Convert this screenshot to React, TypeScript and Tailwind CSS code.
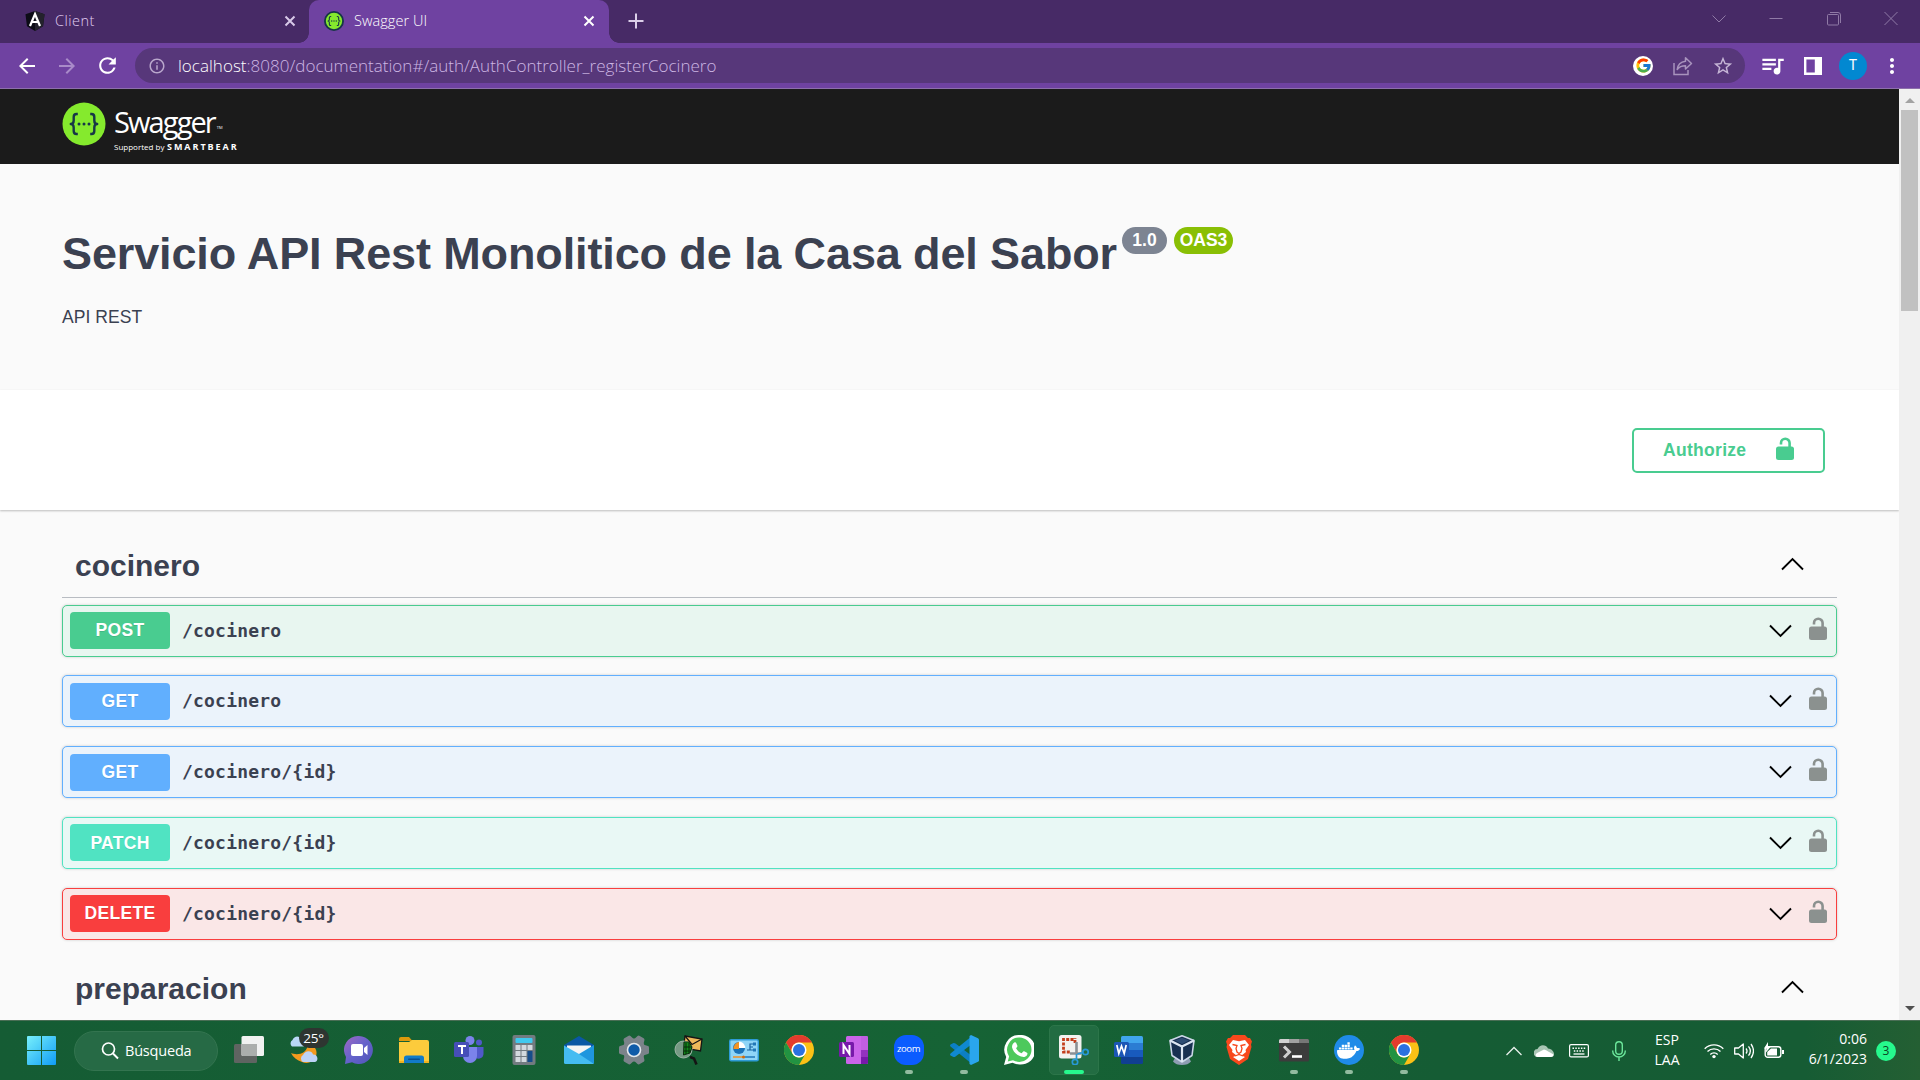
import React from "react";
import { FcGoogle } from "react-icons/fc";
import { SiDocker } from "react-icons/si";
import { MdQueueMusic, MdStarBorder, MdRefresh, MdArrowBack, MdArrowForward, MdInfoOutline, MdMoreVert } from "react-icons/md";

const Svg = ({ w = 30, h = 30, children, className = "" }: { w?: number; h?: number; children: React.ReactNode; className?: string }) => (
  <svg width={w} height={h} viewBox={`0 0 ${w} ${h}`} fill="none" className={`shrink-0 ${className}`}>
    {children}
  </svg>
);

const Close = ({ color }: { color: string }) => (
  <Svg w={12} h={12}>
    <path d="M1.5 1.5l9 9M10.5 1.5l-9 9" stroke={color} strokeWidth="2" />
  </Svg>
);

const Braces = ({ size, ring }: { size: number; ring?: boolean }) => (
  <svg width={size} height={size} viewBox="0 0 44 44" fill="none" className="shrink-0">
    <circle cx="22" cy="22" r={ring ? 20 : 21.5} fill="#85ea2d" stroke={ring ? "#173647" : "none"} strokeWidth={ring ? 4 : 0} />
    <g stroke="#173647" strokeWidth="2.4" strokeLinejoin="round">
      <path d="M15.8 12h-1.3c-2 0-2.8 1-2.8 3v3.500c0 2-.8 3.500-2.900 3.500 2.100 0 2.900 1.500 2.900 3.500V29c0 2 .8 3 2.800 3h1.300" />
      <path d="M28.200 12h1.300c2 0 2.800 1 2.800 3v3.500c0 2 .8 3.500 2.900 3.500-2.100 0-2.900 1.500-2.900 3.500V29c0 2-.8 3-2.800 3h-1.300" />
    </g>
    <g fill="#173647">
      <circle cx="17" cy="22" r="1.500" />
      <circle cx="22" cy="22" r="1.500" />
      <circle cx="27" cy="22" r="1.500" />
    </g>
  </svg>
);

function TabBar() {
  return (
    <div className="flex h-[43px] bg-[#472a66]">
      <div className="flex w-[309px] items-center pb-0.5 pl-[25px] pr-[13px]">
        <Svg w={20} h={20}>
          <path d="M10 0l9.500 3.300-1.500 12L10 20l-8-4.700L.5 3.300z" fill="#0c0c16" />
          <path d="M10 0l9.500 3.300-1.500 12L10 20z" fill="#23222c" />
          <path d="M5 15L10 3l5 12M7 11h6" stroke="#fff" strokeWidth="2.200" />
        </Svg>
        <span className="ml-[10px] flex-1 text-[14.5px] font-light tracking-[0.5px] text-[#e0cdf2]">Client</span>
        <Close color="#d8c9e8" />
      </div>
      <div className="relative flex w-[300px] items-center rounded-t-[10px] bg-[#6f42a1] pb-0.5 pl-[15px] pr-[14px]">
        <span className="absolute bottom-0 -left-[10px] h-[10px] w-[10px] bg-[radial-gradient(circle_at_0_0,#472a66_9.500px,#6f42a1_10px)]" />
        <span className="absolute bottom-0 -right-[10px] h-[10px] w-[10px] bg-[radial-gradient(circle_at_100%_0,#472a66_9.500px,#6f42a1_10px)]" />
        <Braces size={20} ring />
        <span className="ml-[10px] flex-1 text-[14.5px] font-light tracking-[0.05px] text-white">Swagger UI</span>
        <Close color="#ffffff" />
      </div>
      <div className="flex flex-1 items-center pb-0.5 pl-[19px]">
        <Svg w={16} h={16}>
          <path d="M8 .5v15M.5 8h15" stroke="#dccfe9" strokeWidth="2" />
        </Svg>
      </div>
      <div className="flex w-[219px] items-start justify-between pl-[11px] pr-[22px] pt-[11px]">
        <Svg w={14} h={15}><path d="M.5 4.500L7 11l6.500-6.500" stroke="#907aa6" /></Svg>
        <Svg w={14} h={15}><path d="M.5 7.500h13" stroke="#907aa6" /></Svg>
        <Svg w={14} h={15}><path d="M.5 4.500a1 1 0 011-1h9a1 1 0 011 1v8.500a1 1 0 01-1 1h-9a1 1 0 01-1-1zM3 1.500h8a2.500 2.500 0 012.500 2.500v8" stroke="#907aa6" /></Svg>
        <Svg w={14} h={15}><path d="M.5 1l13 13M13.500 1l-13 13" stroke="#907aa6" /></Svg>
      </div>
    </div>
  );
}

function Toolbar() {
  return (
    <div className="flex h-[46px] items-center border-b border-[#8d6fab] bg-[#6f42a1] pl-[15px]">
      <MdArrowBack size={24} className="text-white" />
      <MdArrowForward size={24} className="ml-[16px] text-[#a98bc9]" />
      <MdRefresh size={25} className="ml-[16px] text-white" />
      <div className="ml-[15px] flex h-[35px] w-[1610px] items-center rounded-full bg-[#57377a] pl-[13px] pr-[11px]">
        <MdInfoOutline size={18} className="text-[#b9a7cc]" />
        <span className="ml-[12px] flex-1 text-[17px] font-light tracking-[0.02px] text-[#cdb6e4]">
          <span className="text-white">localhost</span>:8080/documentation#/auth/AuthController_registerCocinero
        </span>
        <span className="flex h-5 w-5 items-center justify-center rounded-full bg-white">
          <FcGoogle size={17} />
        </span>
        <Svg w={20} h={20} className="ml-[20px]">
          <path d="M1 7v11.500h14V14" stroke="#a893bd" strokeWidth="1.500" />
          <path d="M12.500 1.800l6 5.700-6 5.500V9.800C8.500 9.800 6 11 4.200 13.500c.5-4.500 3.500-7.700 8.300-8.300z" stroke="#a893bd" strokeWidth="1.500" strokeLinejoin="round" />
        </Svg>
        <MdStarBorder size={22} className="ml-[19px] text-[#c6b6d6]" />
      </div>
      <MdQueueMusic size={27} className="ml-[14px] text-white" />
      <Svg w={18} h={18} className="ml-[18px]">
        <path d="M1.200 1.200h15.600v15.600H1.200zM12 1v16" stroke="#fff" strokeWidth="2.400" />
        <path d="M12 1h5v16h-5z" fill="#fff" />
      </Svg>
      <span className="ml-[17px] flex h-7 w-7 items-center justify-center rounded-full bg-[#0288d1] font-[Roboto] text-[14px] text-white">T</span>
      <MdMoreVert size={24} className="ml-[13px] text-white" />
    </div>
  );
}

const Lock = ({ className }: { className: string }) => (
  <Svg w={18} h={24} className={className}>
    <path d="M5 7.500V6a4.300 4.300 0 018.600 0v4" stroke="currentColor" strokeWidth="2.600" />
    <rect x="0" y="9.500" width="18" height="13.500" rx="2.500" fill="currentColor" />
  </Svg>
);

const Chevron = ({ up, className = "" }: { up?: boolean; className?: string }) => (
  <Svg w={23} h={14} className={className}>
    <path d={up ? "M1 12.500L11.500 2 22 12.500" : "M1 1.500L11.500 12 22 1.500"} stroke="#000" strokeWidth="1.900" />
  </Svg>
);

type Op = { method: string; path: string; box: string; badge: string };
const get = { method: "GET", box: "border-[#61affe] bg-[#ebf3fb]", badge: "bg-[#61affe]" };
const ops: Op[] = [
  { method: "POST", path: "/cocinero", box: "border-[#49cc90] bg-[#e8f6f0]", badge: "bg-[#49cc90]" },
  { ...get, path: "/cocinero" },
  { ...get, path: "/cocinero/{id}" },
  { method: "PATCH", path: "/cocinero/{id}", box: "border-[#50e3c2] bg-[#e9f8f5]", badge: "bg-[#50e3c2]" },
  { method: "DELETE", path: "/cocinero/{id}", box: "border-[#f93e3e] bg-[#fae7e7]", badge: "bg-[#f93e3e]" },
];

function TagHeader({ name }: { name: string }) {
  return (
    <div className="flex h-[64px] items-center justify-between border-b border-[#b8bcc2] pl-[13px] pr-[33px]">
      <h2 className="text-[30px] font-bold text-[#3b4151]">{name}</h2>
      <Chevron up className="mb-[3px]" />
    </div>
  );
}

function Page() {
  return (
    <main className="h-full flex-1 overflow-hidden bg-[#fafafa] font-['Liberation_Sans',sans-serif]">
      <header className="flex h-[75px] items-start bg-[#1b1b1b] pl-[62px] pt-[13px]">
        <Braces size={44} />
        <div className="ml-[8px] font-['Open_Sans',sans-serif] text-white">
          <div className="mt-[2px] flex h-[37px] items-end">
            <span className="text-[29px] leading-[39px] tracking-[-1.9px]">Swagger</span>
            <span className="ml-[2px] text-[4px] leading-[26px]">TM</span>
          </div>
          <div className="flex items-baseline leading-[12px]">
            <span className="w-[53px] text-[8px] whitespace-nowrap">Supported by</span>
            <span className="text-[9px] font-bold tracking-[1.95px]">SMARTBEAR</span>
          </div>
        </div>
      </header>

      <section className="h-[226px] pl-[62px] pt-[62px] text-[#3b4151]">
        <div className="flex items-start">
          <h1 className="text-[45px] leading-[56px] font-bold tracking-[-0.125px] whitespace-nowrap">Servicio API Rest Monolitico de la Casa del Sabor</h1>
          <span className="ml-[5px] mt-[1px] flex h-[27px] w-[45px] items-center justify-center rounded-full bg-[#7d8492] text-[17.5px] font-bold text-white">1.0</span>
          <span className="ml-[7px] mt-[1px] flex h-[27px] w-[59px] items-center justify-center rounded-full bg-[#89bf04] text-[17.5px] font-bold text-white">OAS3</span>
        </div>
        <p className="mt-[24px] text-[17.5px] leading-[22px] tracking-[0.05px]">API REST</p>
      </section>

      <section className="flex h-[120px] items-start justify-end bg-white pr-[74px] pt-[38px] shadow-[0_1px_2px_0_rgba(0,0,0,0.25)]">
        <button className="flex h-[45px] w-[193px] items-center justify-between rounded-[5px] border-2 border-[#49cc90] pl-[29px] pr-[29px] pb-[1px] text-[17.5px] font-bold tracking-[0.3px] text-[#49cc90]">
          Authorize
          <Lock className="mb-[3px]" />
        </button>
      </section>

      <section className="pl-[62px] pr-[62px] pt-[24px]">
        <TagHeader name="cocinero" />
        <div className="flex flex-col gap-[18.75px] pt-[6.5px]">
          {ops.map((op) => (
            <div key={op.method + op.path} className={`flex h-[52px] items-center rounded-[5px] border pl-[7px] pr-[9px] shadow-[0_0_3px_rgba(0,0,0,0.19)] ${op.box}`}>
              <span className={`flex h-[37px] w-[100px] items-center justify-center rounded-[4px] text-[17.5px] font-bold tracking-[0.3px] text-white [text-shadow:0_1px_0_rgba(0,0,0,0.1)] ${op.badge}`}>{op.method}</span>
              <span className="mb-[1px] ml-[12px] flex-1 font-['DejaVu_Sans_Mono',monospace] text-[18px] font-bold tracking-[0.2px] text-[#3b4151]">{op.path}</span>
              <Chevron />
              <Lock className="mb-[4px] ml-[17px] text-[#8b918f]" />
            </div>
          ))}
        </div>
        <div className="mt-[17px]">
          <TagHeader name="preparacion" />
        </div>
      </section>
    </main>
  );
}

function Scrollbar() {
  return (
    <div className="flex h-full w-[21px] flex-col items-center bg-[#f0f0f0] py-[8px]">
      <Svg w={10} h={6}><path d="M0 6l5-5 5 5z" fill="#a3a3a3" /></Svg>
      <div className="mt-[7px] h-[201px] w-[17px] bg-[#c1c1c1]" />
      <div className="flex-1" />
      <Svg w={10} h={6}><path d="M0 0l5 5 5-5z" fill="#505050" /></Svg>
    </div>
  );
}

const TaskView = () => (
  <Svg>
    <rect x="0" y="9" width="23" height="19" rx="1.500" fill="#5f6461" />
    <rect x="7.500" y="1" width="22.500" height="20" rx="1.500" fill="#f1f2f1" />
    <path d="M7.500 9H23v12H9a1.500 1.500 0 01-1.500-1.500z" fill="#abaeac" />
  </Svg>
);

const Weather = () => (
  <div className="relative h-[30px] w-[30px]">
    <Svg>
      <path d="M2 18c3 1.500 9 2 13-1 3-2.500 4-6 4-9 7 2 10 8 8 13-3 7-9 8-14 6C8 25.500 4 22 2 18z" fill="#f39a1e" />
      <path d="M3 11.500a4 4 0 01.5-6.500C5 1 10 0 12 4c3-1 5 2 4 5 0 2-1 2.500-3 2.500z" fill="#b9d8f6" />
      <path d="M14 27a4 4 0 010-7c2-5 9-5 10-.5 5-.5 6 6.500 2 7.500z" fill="#bdd3f6" />
    </Svg>
    <span className="absolute -top-[7px] left-[10px] flex h-[20px] w-[30px] items-center justify-center rounded-full bg-[#2e3531] text-[13.5px] tracking-[-0.3px] text-white">25°</span>
  </div>
);

const Chat = () => (
  <Svg>
    <defs>
      <linearGradient id="chat" x1="0" y1="0" x2="1" y2="1"><stop stopColor="#a068c4" /><stop offset=".5" stopColor="#6563cb" /><stop offset="1" stopColor="#5054b8" /></linearGradient>
    </defs>
    <path d="M15 1a14 14 0 11-7 26.200L1 29l1-7A14 14 0 0115 1z" fill="url(#chat)" />
    <rect x="7" y="9" width="12" height="12" rx="2" fill="#fff" />
    <path d="M20 13l3.500-3v10L20 17z" fill="#fff" />
  </Svg>
);

const Explorer = () => (
  <Svg>
    <path d="M0 4a2 2 0 012-2h8l3.500 4H0z" fill="#dd9a0d" />
    <path d="M0 7h10l3-2h15a2 2 0 012 2v21H2a2 2 0 01-2-2z" fill="#fccb3c" />
    <path d="M0 26h30v2H0z" fill="#f0b21f" />
    <path d="M5 28v-5a2.500 2.500 0 012.500-2.500h15A2.500 2.500 0 0125 23v5z" fill="#127bc7" />
    <rect x="9" y="23.500" width="12" height="1.500" rx=".7" fill="#0b4f8d" />
  </Svg>
);

const Teams = () => (
  <Svg>
    <circle cx="25" cy="7.500" r="3" fill="#5059c9" />
    <path d="M20 12h9.500v7a5 5 0 01-7.500 4z" fill="#5059c9" />
    <circle cx="16" cy="5.500" r="4.500" fill="#7b83eb" />
    <path d="M9 12h14v9a7 7 0 01-14 0z" fill="#7b83eb" />
    <rect x="0" y="7" width="15" height="15" rx="1.500" fill="#464eb8" />
    <path d="M4 11h8M8 11v8" stroke="#fff" strokeWidth="2" />
  </Svg>
);

const Calculator = () => (
  <Svg>
    <rect x="3.500" y="0" width="23" height="30" rx="2" fill="#727b80" />
    <rect x="6.500" y="3" width="17" height="5" rx="1" fill="#40c9ee" />
    <g fill="#d3d9de">
      {[10, 16, 22].map((y) => [6.5, 12.5, 18.5].map((x) => (x > 18 && y > 10 ? null : <rect key={`${x}-${y}`} x={x} y={y} width="5" height="5" rx=".5" />)))}
    </g>
    <rect x="18.500" y="16" width="5" height="11" rx=".5" fill="#174d8a" />
  </Svg>
);

const Mail = () => (
  <Svg>
    <path d="M0 10L15 1l15 9v6H0z" fill="#0a57a4" />
    <path d="M3 10.500h24v6L15 22 3 16.500z" fill="#f4f4f4" />
    <path d="M30 10v17.500a1.500 1.500 0 01-1.500 1.500H2l13-10z" fill="#1f96de" />
    <path d="M0 10.500L15 19l15 10H1.500A1.500 1.500 0 010 27.500z" fill="#45bcf1" />
  </Svg>
);

const Settings = () => (
  <Svg>
    <g fill="#7b838a">
      <circle cx="15" cy="15" r="11.500" />
      {[0, 60, 120, 180, 240, 300].map((a) => (
        <path key={a} d="M9.500 6l1.500-5q.4-1 1.500-1h5q1.100 0 1.500 1l1.500 5z" transform={`rotate(${a + 30} 15 15)`} />
      ))}
    </g>
    <circle cx="15" cy="15" r="6.500" fill="#0f5ba8" stroke="#e4e9ee" strokeWidth="1.600" />
  </Svg>
);

const MailTracker = () => (
  <Svg>
    <path d="M11 1l17 3-1.500 12-17-3z" fill="#edb95a" stroke="#151515" strokeWidth="1.300" />
    <path d="M11 1l7 8.500L28 4" stroke="#151515" strokeWidth="1.300" />
    <circle cx="9.500" cy="14.500" r="8.500" fill="#87a493" fillOpacity=".85" stroke="#a1b5a8" />
    <path d="M10 7h5l3 5-2 6-6.500 2z" fill="#128a1c" stroke="#0a2c0d" />
    <path d="M12 8v11M15 8v10M10 12h8M10 16h7" stroke="#062b0b" />
    <path d="M16 22l4 1.500 2.500 6" stroke="#141414" strokeWidth="2.600" />
  </Svg>
);

const ControlPanel = () => (
  <Svg>
    <rect x=".7" y="4.700" width="28.600" height="21" rx="1.500" fill="#8fd5f7" stroke="#2e9bd6" strokeWidth="1.400" />
    <circle cx="10" cy="13" r="6" fill="#1a73b8" />
    <path d="M10 13V6.500a6.500 6.500 0 016.300 6.500z" fill="#fff" />
    <path d="M10 14V7a6.500 6.500 0 00-5.500 7z" fill="#f49424" />
    <path d="M18 15h3V9h3M21 12h3M21 15h3" stroke="#17629f" strokeWidth="1.200" />
    <path d="M24 7.500h3v3h-3zM24 13.500h3v3h-3z" fill="#2177b8" />
    <path d="M4 22h12" stroke="#ef8f24" strokeWidth="1.500" />
    <path d="M16 22h10" stroke="#2177b8" strokeWidth="1.500" />
    <circle cx="14.500" cy="22" r="1.500" fill="#c86b12" />
  </Svg>
);

const Chrome = () => (
  <Svg>
    <circle cx="15" cy="15" r="15" fill="#fbc116" />
    <path d="M2 7.500A15 15 0 0128 7.500H15a7.500 7.500 0 00-6.500 11.250z" fill="#e33b2e" />
    <path d="M2 7.500A15 15 0 0015 30l6.500-11.250a7.500 7.500 0 01-13 0z" fill="#229342" />
    <circle cx="15" cy="15" r="7.500" fill="#fff" />
    <circle cx="15" cy="15" r="6" fill="#2b71e0" />
  </Svg>
);

const OneNote = () => (
  <Svg>
    <rect x="7" y="1" width="22" height="28" rx="1.500" fill="#ca64ea" />
    <path d="M22 1h5.500A1.500 1.500 0 0129 2.500V15h-7z" fill="#c05fe2" />
    <path d="M22 15h7v7h-7z" fill="#9332bf" />
    <path d="M22 22h7v5.500a1.500 1.500 0 01-1.500 1.500H22z" fill="#7719aa" />
    <rect x="0" y="7" width="15" height="15" rx="1.500" fill="#7719aa" />
    <path d="M4.500 19v-9l6 9v-9" stroke="#fff" strokeWidth="2" />
  </Svg>
);

const Zoom = () => (
  <div className="flex h-[30px] w-[30px] items-center justify-center rounded-[12px] bg-[#0b5cff] pb-[3px] text-[9.5px] leading-none font-normal tracking-[-0.4px] text-white">zoom</div>
);

const VSCode = () => (
  <Svg>
    <path d="M1.500 9.500L4.500 8q1-.3 2 .5L23 21v8L1.500 11.500q-1-1 0-2z" fill="#0c7fc4" />
    <path d="M1.500 20.500L4.500 22q1 .3 2-.5L23 9V1L1.500 18.500q-1 1 0 2z" fill="#1089d0" />
    <path d="M22 0l7 3.300q1 .5 1 1.500v20.400q0 1-1 1.500L22 30l-1.500-1V1z" fill="#2aa6ee" />
  </Svg>
);

const WhatsApp = () => (
  <Svg>
    <path d="M15.500 0A14.800 14.800 0 1115.500 29.500c-2.500 0-5-.6-7-1.700L0 30l2.200-8A14.800 14.800 0 0115.500 0z" fill="#fff" />
    <path d="M15.300 2.500A12.200 12.200 0 1115.300 26.900c-2.300 0-4.500-.6-6.300-1.700L3.700 26.500l1.400-5.100A12.200 12.200 0 0115.300 2.500z" fill="#4dc95c" />
    <path d="M10.300 7.500c.7-.5 1.600-.3 1.900.4l1.200 2.800c.2.600-.1 1.200-1.300 2.500 1.500 2.700 3 4 5.600 5 1.500-1.800 1.800-2.200 2.500-1.900l2.800 1.400c.7.400.6 1.300.1 2.200-1.200 1.800-3 2.300-5 1.900-5.500-1.300-9.200-5.400-10-9.300-.3-2.200.7-4 2.200-5z" fill="#fff" />
  </Svg>
);

const Snip = () => (
  <Svg>
    <rect x="0" y="0" width="22.500" height="23.500" rx="2.500" fill="#f3f2f0" />
    <path d="M14.500 4.500H4.500V17H12M16 8V3" stroke="#c43e1c" strokeWidth="2.800" strokeDasharray="3 1.300" />
    <path d="M17.500 7v12.500M11 18.500h11" stroke="#8b9095" strokeWidth="2.600" />
    <circle cx="26.500" cy="17" r="2.700" stroke="#2899d8" strokeWidth="1.700" />
    <circle cx="16" cy="27" r="2.700" stroke="#2899d8" strokeWidth="1.700" />
    <path d="M17.500 19v5.500M18.500 19l5.500-1.500" stroke="#2899d8" strokeWidth="1.700" />
  </Svg>
);

const Word = () => (
  <Svg>
    <path d="M7 2.500A1.500 1.500 0 018.500 1h19A1.500 1.500 0 0129 2.500V8H7z" fill="#41a5ee" />
    <path d="M7 8h22v7H7z" fill="#2b7cd3" />
    <path d="M7 15h22v7H7z" fill="#185abd" />
    <path d="M7 22h22v5.500a1.500 1.500 0 01-1.500 1.500h-19A1.500 1.500 0 017 27.500z" fill="#103f91" />
    <rect x="0" y="7" width="15" height="15" rx="1.500" fill="#1b56b5" />
    <path d="M2.800 10l2 8.500L7.500 11l2.700 7.500 2-8.500" stroke="#fff" strokeWidth="1.700" />
  </Svg>
);

const VBox = () => (
  <Svg className="-ml-1">
    <path d="M8 23h14l2 3.500q-3 3.500-9 3.500t-9-3.500z" fill="#8e9db3" />
    <path d="M15 .8L27 5.500 25 20.500 15 27 5 20.500 3 5.500z" fill="#183051" stroke="#ccd7e8" strokeWidth="1.600" strokeLinejoin="round" />
    <path d="M3 5.500L15 11.500l12-6M15 11.500V27" stroke="#dce5f2" strokeWidth="2.200" />
    <path d="M8 5.500l7-2.700 7 2.700-7 3.500z" fill="#2e4c73" />
  </Svg>
);

const Brave = () => (
  <Svg>
    <path d="M9 0h12l3 3h2l2 3.500-1 3 .5 2.500-3.500 12L15 30l-9-6L2.500 12 3 9.500l-1-3L4 3h2z" fill="#f8481c" />
    <path d="M9 5l6 1.200L21 5l4 5-3.500 5 .5 2-4.500 3.500L21 22l-6 4-6-4 3.500-1.500L8 17l.5-2L5 10z" fill="#fff" />
    <path d="M8.500 9.500l4.500 1-1 3 1 3.500 2 1.500 2-1.500 1-3.500-1-3 4.500-1M11 21l4-1.500 4 1.500" stroke="#f8481c" strokeWidth="1.300" />
  </Svg>
);

const Terminal = () => (
  <Svg>
    <rect x="0" y="4" width="30" height="22.500" rx="1.500" fill="#3c3c3c" />
    <path d="M1.500 4H10v4H0V5.500A1.500 1.500 0 011.500 4z" fill="#d0d0d0" />
    <path d="M10 4h10v4H10z" fill="#a0a0a0" />
    <path d="M20 4h8.500A1.500 1.500 0 0130 5.500V8H20z" fill="#767676" />
    <path d="M5 11.500l5.500 5.500L5 22.500" stroke="#cfcfcf" strokeWidth="3" />
    <path d="M13 21.500h10" stroke="#fff" strokeWidth="2.600" />
  </Svg>
);

const Docker = () => (
  <div className="flex h-[30px] w-[30px] items-center justify-center rounded-full bg-[#1f8be8]">
    <SiDocker size={23} className="text-white" />
  </div>
);

type Task = { icon: React.ReactNode; running?: boolean; active?: boolean };
const tasks: Task[] = [
  { icon: <TaskView /> },
  { icon: <Weather /> },
  { icon: <Chat /> },
  { icon: <Explorer /> },
  { icon: <Teams /> },
  { icon: <Calculator /> },
  { icon: <Mail /> },
  { icon: <Settings /> },
  { icon: <MailTracker /> },
  { icon: <ControlPanel /> },
  { icon: <Chrome /> },
  { icon: <OneNote /> },
  { icon: <Zoom />, running: true },
  { icon: <VSCode />, running: true },
  { icon: <WhatsApp /> },
  { icon: <Snip />, active: true },
  { icon: <Word /> },
  { icon: <VBox /> },
  { icon: <Brave /> },
  { icon: <Terminal />, running: true },
  { icon: <Docker />, running: true },
  { icon: <Chrome />, running: true },
];

function Taskbar() {
  return (
    <footer className="flex h-[60px] items-center border-t border-[#4a6e55] bg-[linear-gradient(90deg,#155c34_0%,#166335_50%,#155c34_75%,#165c34_94%,#245f33_100%)] pl-[27px] text-white">
      <Svg w={29} h={29}>
        <defs>
          <linearGradient id="win" x1="0" y1="0" x2="29" y2="29" gradientUnits="userSpaceOnUse"><stop stopColor="#78f0fb" /><stop offset="1" stopColor="#109cf5" /></linearGradient>
        </defs>
        <path d="M1 0h13v14H0V1a1 1 0 011-1zM15 0h13a1 1 0 011 1v13H15zM0 15h14v14H1a1 1 0 01-1-1zM15 15h14v13a1 1 0 01-1 1H15z" fill="url(#win)" />
      </Svg>
      <div className="ml-[18px] flex h-[40px] w-[144px] items-center rounded-full border border-[#33744f] bg-[#266a45] pl-[26px]">
        <Svg w={18} h={18}><circle cx="7.500" cy="7" r="6" stroke="#fff" strokeWidth="1.700" /><path d="M12 11.500l5 5" stroke="#fff" strokeWidth="1.900" /></Svg>
        <span className="ml-[6px] pt-px text-[14.5px] tracking-[-0.2px]">Búsqueda</span>
      </div>
      <div className="ml-[3px] flex">
        {tasks.map((t, i) => (
          <div key={i} className="flex h-[59px] w-[55px] justify-center">
            <div className={`relative mt-[4px] flex h-[50px] w-[50px] items-center justify-center rounded-[5px] ${t.active ? "border border-[#2c7549] bg-[#226c42]" : ""}`}>
              {t.icon}
              {t.running && <span className="absolute bottom-px left-[21px] h-[4px] w-[8px] rounded-full bg-[#92bb9f]" />}
              {t.active && <span className="absolute bottom-0 left-[14px] h-[4px] w-[20px] rounded-full bg-[#26f98d]" />}
            </div>
          </div>
        ))}
      </div>
      <div className="ml-[75px] flex flex-1 items-center text-[14px] leading-[20px]">
        <Svg w={16} h={10}><path d="M.5 9L8 1.500 15.500 9" stroke="#e8f0eb" strokeWidth="1.300" /></Svg>
        <Svg w={20} h={14} className="ml-[12px]">
          <path d="M4 13a4 4 0 01-.5-8C5.500 0 12 0 14 4.500c4 0 6 4 6 5.500 0 2-1 3-3 3z" fill="#a9c5b4" />
          <path d="M2 12.500C1 11 2 9 4 8.500l6-3c3 1 5 2.500 9.500 5 0 1.500-1 2.500-2.500 2.500H3.500z" fill="#fff" />
        </Svg>
        <Svg w={20} h={14} className="ml-[15px]">
          <rect x=".6" y=".6" width="18.800" height="12.300" rx="1.500" stroke="#fff" strokeWidth="1.200" />
          <path d="M3.500 4.200h13M4.800 7h11" stroke="#fff" strokeWidth="1.500" strokeDasharray="1.500 1.300" />
          <path d="M4.500 10h11" stroke="#fff" strokeWidth="1.300" />
        </Svg>
        <Svg w={14} h={20} className="ml-[23px]">
          <rect x="3.700" y=".7" width="6.600" height="12.500" rx="3.300" stroke="#6ce79b" strokeWidth="1.400" />
          <path d="M.7 9.500v.5a6.300 6 0 0012.600 0v-.5M7 16v4" stroke="#6ce79b" strokeWidth="1.400" />
        </Svg>
        <div className="mb-[2px] ml-[24px] w-[34px] text-center">ESP<br />LAA</div>
        <Svg w={20} h={16} className="ml-[20px]">
          <path d="M.7 5.700a13.200 13.200 0 0118.600 0M3.500 8.600a9.200 9.200 0 0113 0M6.300 11.400a5.200 5.200 0 017.400 0" stroke="#fff" strokeWidth="1.400" />
          <circle cx="10" cy="13.600" r="1.700" fill="#fff" />
        </Svg>
        <Svg w={20} h={18} className="ml-[10px]">
          <path d="M.7 6h3.800L9.300 2v14l-4.800-4H.7zM12 6.500q2 2.500 0 5M14.500 4.300q3.700 4.700 0 9.400M17 2q5 7 0 14" stroke="#fff" strokeWidth="1.300" strokeLinejoin="round" />
        </Svg>
        <Svg w={20} h={18} className="ml-[10px]">
          <rect x="1.200" y="4.700" width="15.600" height="10.600" rx="2.500" stroke="#fff" strokeWidth="1.400" />
          <path d="M7 6.500h6V13.500H3.200V10z" fill="#fff" />
          <path d="M18 8v4h2V8z" fill="#fff" />
          <path d="M4 0L0 6.500h2.500L1.500 11 6.500 5H4z" fill="#fff" />
        </Svg>
        <div className="mb-[3px] ml-[16px] w-[67px] text-right">0:06<br />6/1/2023</div>
        <span className="ml-[9px] flex h-5 w-5 items-center justify-center rounded-full bg-[#26f98d] text-[12px] text-[#0a4423]">3</span>
      </div>
    </footer>
  );
}

export default function App() {
  return (
    <div className="flex h-[1080px] w-[1920px] flex-col overflow-hidden bg-white font-['Open_Sans','Noto_Sans',sans-serif]">
      <TabBar />
      <Toolbar />
      <div className="flex h-[931px]">
        <Page />
        <Scrollbar />
      </div>
      <Taskbar />
    </div>
  );
}
